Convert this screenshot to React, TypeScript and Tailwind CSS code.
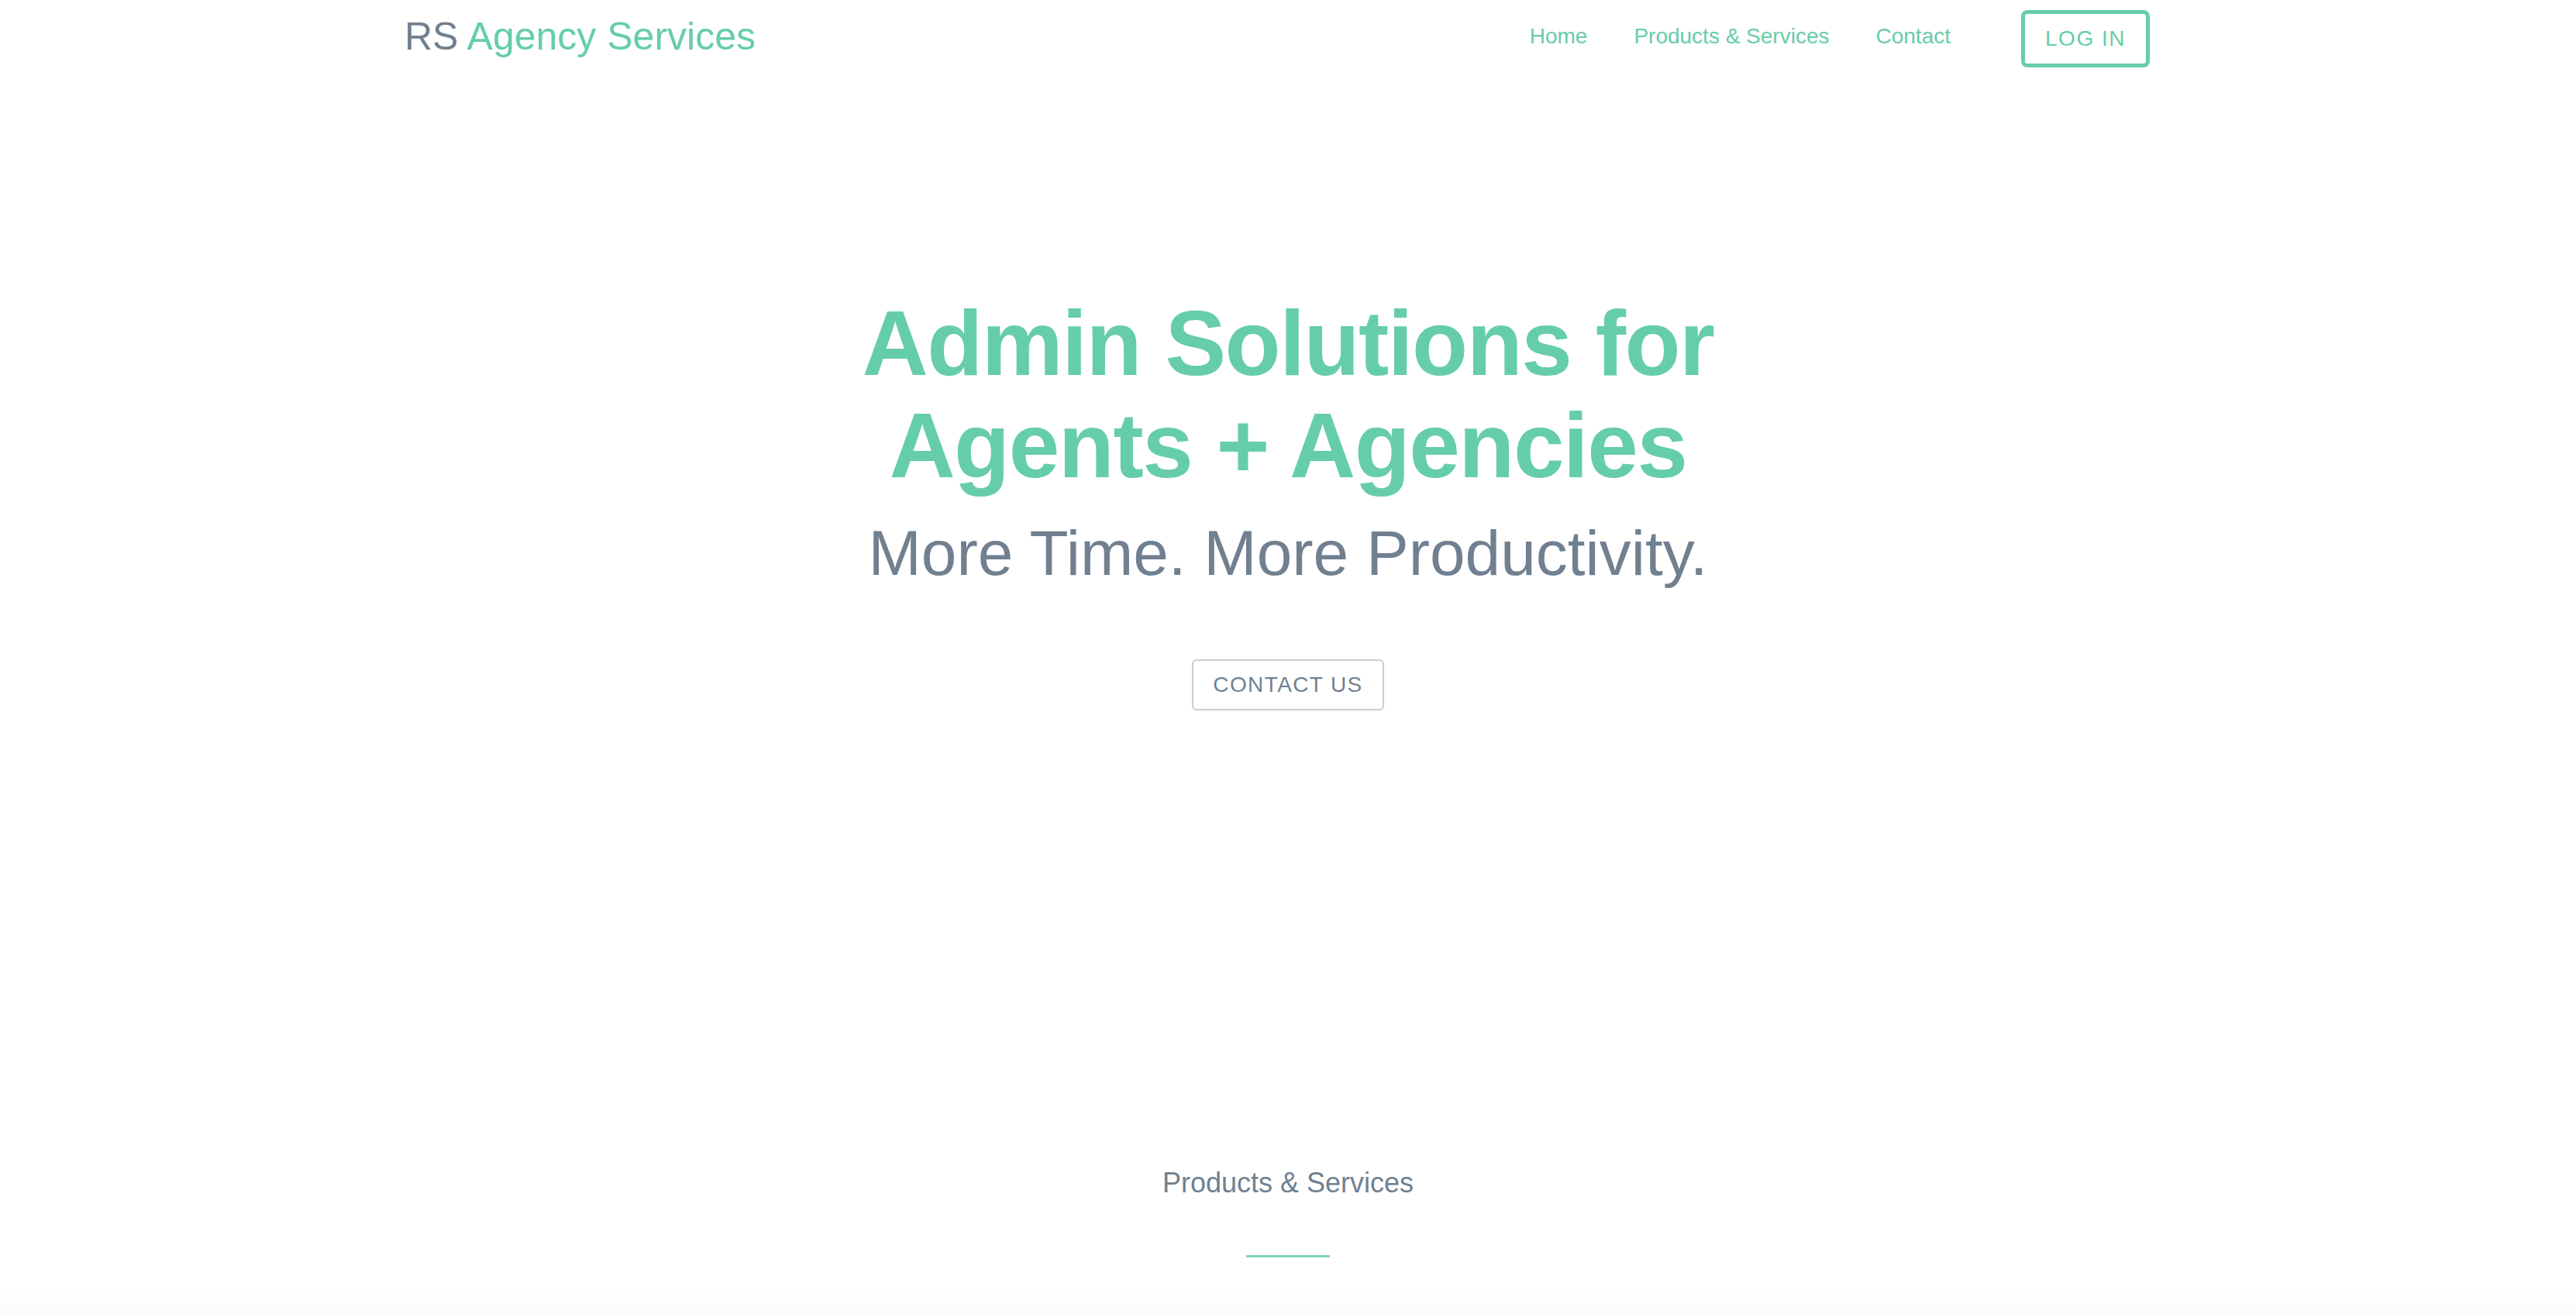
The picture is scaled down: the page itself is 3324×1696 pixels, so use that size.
export default function App() {
  const font = { fontFamily: '"Liberation Sans", Arial, sans-serif' };

  return (
    <div className="min-h-[1696px] bg-white" style={font}>
      {/* header */}
      <header className="mx-auto flex h-[93px] w-[2340px] items-center justify-between px-[30px]">
        <a href="#" className="text-[50px] leading-[1.2] text-[#708090]">
          RS <span className="text-[#66cdaa]">Agency Services</span>
        </a>
        <nav className="flex items-center">
          <a href="#" className="px-[30px] text-[28px] leading-[1.2] text-[#66cdaa]">Home</a>
          <a href="#" className="px-[30px] text-[28px] leading-[1.2] text-[#66cdaa]">Products &amp; Services</a>
          <a href="#" className="px-[30px] text-[28px] leading-[1.2] text-[#66cdaa]">Contact</a>
          <button className="ml-[61px] mr-[28px] mt-[7px] flex h-[74px] w-[166px] items-center justify-center rounded-[8px] border-[5px] border-[#66cdaa] text-[28px] tracking-[1.5px] text-[#66cdaa]">
            LOG IN
          </button>
        </nav>
      </header>

      {/* hero */}
      <section className="flex flex-col items-center pt-[284px] text-center">
        <h1 className="text-[118px] font-bold leading-[132px] tracking-[-1.5px] text-[#66cdaa]">
          Admin Solutions for
          <br />
          Agents + Agencies
        </h1>
        <p className="mt-[24px] text-[82px] leading-[1.2] text-[#708090]">More Time. More Productivity.</p>
        <button className="mt-[88px] flex h-[66px] w-[248px] items-center justify-center rounded-[6px] border-2 border-[#cccccc] text-[28px] tracking-[1.4px] text-[#708090]">
          CONTACT US
        </button>
      </section>

      {/* products & services */}
      <section className="mt-[588px] flex flex-col items-center">
        <h2 className="text-[36px] leading-[1.2] text-[#708090]">Products &amp; Services</h2>
        <div className="mt-[71px] h-[3px] w-[108px] bg-[#7fd6b8]" />
      </section>
      <div className="mt-[44px] h-[60px] bg-gradient-to-b from-[#fefefe] to-[#f9f9f9]" />
    </div>
  );
}
